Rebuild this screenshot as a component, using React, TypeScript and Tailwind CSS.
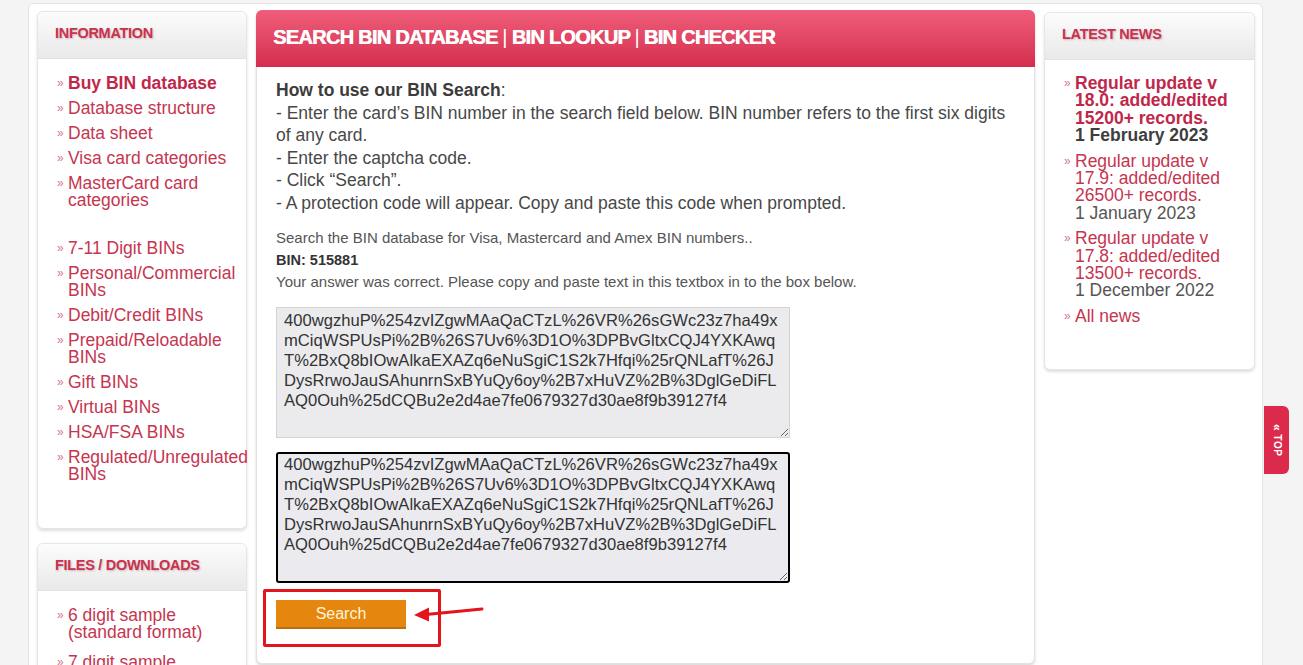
const code =
  "400wgzhuP%254zvIZgwMAaQaCTzL%26VR%26sGWc23z7ha49x\nmCiqWSPUsPi%2B%26S7Uv6%3D1O%3DPBvGltxCQJ4YXKAwq\nT%2BxQ8bIOwAlkaEXAZq6eNuSgiC1S2k7Hfqi%25rQNLafT%26J\nDysRrwoJauSAhunrnSxBYuQy6oy%2B7xHuVZ%2B%3DglGeDiFL\nAQ0Ouh%25dCQBu2e2d4ae7fe0679327d30ae8f9b39127f4";

const infoLinks: { lines: string[]; bold?: boolean; spacer?: boolean }[] = [
  { lines: ["Buy BIN database"], bold: true },
  { lines: ["Database structure"] },
  { lines: ["Data sheet"] },
  { lines: ["Visa card categories"] },
  { lines: ["MasterCard card", "categories"] },
  { lines: [], spacer: true },
  { lines: ["7-11 Digit BINs"] },
  { lines: ["Personal/Commercial", "BINs"] },
  { lines: ["Debit/Credit BINs"] },
  { lines: ["Prepaid/Reloadable", "BINs"] },
  { lines: ["Gift BINs"] },
  { lines: ["Virtual BINs"] },
  { lines: ["HSA/FSA BINs"] },
  { lines: ["Regulated/Unregulated", "BINs"] },
];

const news = [
  { title: ["Regular update v", "18.0: added/edited", "15200+ records."], date: "1 February 2023", bold: true },
  { title: ["Regular update v", "17.9: added/edited", "26500+ records."], date: "1 January 2023" },
  { title: ["Regular update v", "17.8: added/edited", "13500+ records."], date: "1 December 2022" },
];

const Bullet = () => (
  <span className="w-[11px] shrink-0 text-[12px] leading-[17px] text-[#d9778c]">»</span>
);

const BoxHeader = ({ title }: { title: string }) => (
  <div className="flex h-[47px] items-center rounded-t-md border-b border-[#e2e2e2] bg-linear-to-b from-[#fcfcfc] to-[#e9e9e9] pb-[2px] pl-[17px]">
    <span className="text-[14.5px] font-bold tracking-[-0.3px] text-[#c8324f] [text-shadow:1px_1px_2px_rgba(120,0,30,0.25)]">
      {title}
    </span>
  </div>
);

const SideBox = ({ title, children, className = "" }: { title: string; children: React.ReactNode; className?: string }) => (
  <div className={"rounded-md border border-[#e6e6e6] bg-white shadow-[0_2px_3px_rgba(0,0,0,0.13)] " + className}>
    <BoxHeader title={title} />
    {children}
  </div>
);

const App = () => {
  return (
    <div className="relative h-[665px] w-[1303px] overflow-hidden bg-[#f4f4f4] pl-[28px] pt-[3px] font-['Liberation_Sans',Arial,sans-serif]">
      <div className="flex h-[700px] w-[1235px] gap-[9px] rounded-t-md border border-[#e4e4e4] bg-white px-[8px] pt-[7px]">
        {/* left column */}
        <div className="flex w-[210px] shrink-0 flex-col gap-[14px]">
          <SideBox title="INFORMATION">
            <ul className="flex flex-col gap-[8px] pb-[45px] pl-[19px] pt-[16px]">
              {infoLinks.map((l, i) =>
                l.spacer ? (
                  <li key={i} className="h-[15px]" />
                ) : (
                  <li key={i} className="flex">
                    <Bullet />
                    <span
                      className={
                        "whitespace-nowrap text-[17.5px] leading-[17px] " +
                        (l.bold ? "font-bold text-[#c0284b]" : "text-[#c6354f]")
                      }
                    >
                      {l.lines.map((t, j) => (
                        <span key={j} className="block">
                          {t}
                        </span>
                      ))}
                    </span>
                  </li>
                )
              )}
            </ul>
          </SideBox>
          <SideBox title="FILES / DOWNLOADS">
            <ul className="flex flex-col gap-[13px] pl-[19px] pt-[16px]">
              <li className="flex">
                <Bullet />
                <span className="text-[17.5px] leading-[17px] text-[#c6354f]">
                  <span className="block">6 digit sample</span>
                  <span className="block">(standard format)</span>
                </span>
              </li>
              <li className="flex">
                <Bullet />
                <span className="text-[17.5px] leading-[17px] text-[#c6354f]">
                  <span className="block">7 digit sample</span>
                  <span className="block">(standard format)</span>
                </span>
              </li>
            </ul>
          </SideBox>
        </div>

        {/* main column */}
        <div className="-mt-px h-[654px] w-[779px] shrink-0 rounded-md border border-[#e2e2e2] bg-white shadow-[0_2px_3px_rgba(0,0,0,0.15)]">
          <div className="-mx-px -mt-px flex h-[57px] items-center rounded-t-md bg-linear-to-b from-[#ef5d7a] to-[#d42c4e] pb-[4px] pl-[17px]">
            <h1 className="whitespace-nowrap text-[20px] font-bold tracking-[-0.72px] text-white [text-shadow:0.6px_0_0_#fff]">
              SEARCH BIN DATABASE <span className="font-normal [text-shadow:none]">|</span> BIN LOOKUP{" "}
              <span className="font-normal [text-shadow:none]">|</span> BIN CHECKER
            </h1>
          </div>
          <div className="px-[19px] pt-[12px]">
            <div className="whitespace-nowrap text-[17.5px] leading-[22.5px] text-[#484848]">
              <p>
                <b className="text-[#3c3c3c]">How to use our BIN Search</b>:
              </p>
              <p>- Enter the card’s BIN number in the search field below. BIN number refers to the first six digits</p>
              <p>of any card.</p>
              <p>- Enter the captcha code.</p>
              <p>- Click “Search”.</p>
              <p>- A protection code will appear. Copy and paste this code when prompted.</p>
            </div>
            <div className="mt-[13px] whitespace-nowrap text-[15px] leading-[22px] text-[#555]">
              <p>Search the BIN database for Visa, Mastercard and Amex BIN numbers..</p>
              <p className="text-[14.5px] font-bold text-[#333]">BIN: 515881</p>
              <p>Your answer was correct. Please copy and paste text in this textbox in to the box below.</p>
            </div>
            <textarea
              readOnly
              wrap="off"
              defaultValue={code}
              className="mt-[14px] block h-[131px] w-[514px] overflow-hidden border border-[#d3d3d6] bg-[#ebebee] px-[7px] pt-[3px] text-[16.6px] leading-[20px] text-[#333] outline-none"
            />
            <textarea
              readOnly
              wrap="off"
              defaultValue={code}
              className="mt-[14px] block h-[131px] w-[514px] overflow-hidden rounded-[3px] border-2 border-black bg-[#ebebef] px-[6px] pt-[1px] text-[16.6px] leading-[20px] text-[#333] outline-none"
            />
            <div className="relative mt-[17px] w-[130px]">
              <button className="block h-[29px] w-[130px] border-b-2 border-[#b9700f] bg-[#e5870f] text-[16px] text-[#fff4da]">
                Search
              </button>
              <div className="pointer-events-none absolute left-[-13px] top-[-11px] h-[58px] w-[178px] rounded-[2px] border-[3px] border-[#e3141c]" />
              <svg
                className="pointer-events-none absolute left-[136px] top-[-4px]"
                width="76"
                height="30"
                viewBox="0 0 76 30"
              >
                <line x1="14" y1="18.5" x2="70" y2="13" stroke="#e3141c" strokeWidth="3" strokeLinecap="round" />
                <polygon points="2,19 17,11.5 17,25.5" fill="#e3141c" />
              </svg>
            </div>
          </div>
        </div>

        {/* right column */}
        <div className="w-[211px] shrink-0">
          <SideBox title="LATEST NEWS" className="mt-[1px]">
            <ul className="flex flex-col gap-[8px] pb-[44px] pl-[19px] pt-[15px]">
              {news.map((n, i) => (
                <li key={i} className="flex">
                  <Bullet />
                  <span className={"text-[17.5px] leading-[17.4px] " + (n.bold ? "font-bold" : "")}>
                    {n.title.map((t, j) => (
                      <span key={j} className={"block whitespace-nowrap " + (n.bold ? "text-[#c0284b]" : "text-[#c6354f]")}>
                        {t}
                      </span>
                    ))}
                    <span className={"block whitespace-nowrap " + (n.bold ? "text-[#3e3e3e]" : "text-[#555]")}>{n.date}</span>
                  </span>
                </li>
              ))}
              <li className="flex">
                <Bullet />
                <span className="text-[17.5px] leading-[17.4px] text-[#c6354f]">All news</span>
              </li>
            </ul>
          </SideBox>
        </div>
      </div>

      {/* back to top tab */}
      <div className="absolute left-[1264px] top-[406px] flex h-[68px] w-[25px] items-center justify-center rounded-r-md bg-[#dc2a4c]">
        <span className="text-[10px] font-bold tracking-[0.5px] text-white [writing-mode:vertical-rl]">
          <span className="text-[12px]">«</span> TOP
        </span>
      </div>
    </div>
  );
};

export default App;
